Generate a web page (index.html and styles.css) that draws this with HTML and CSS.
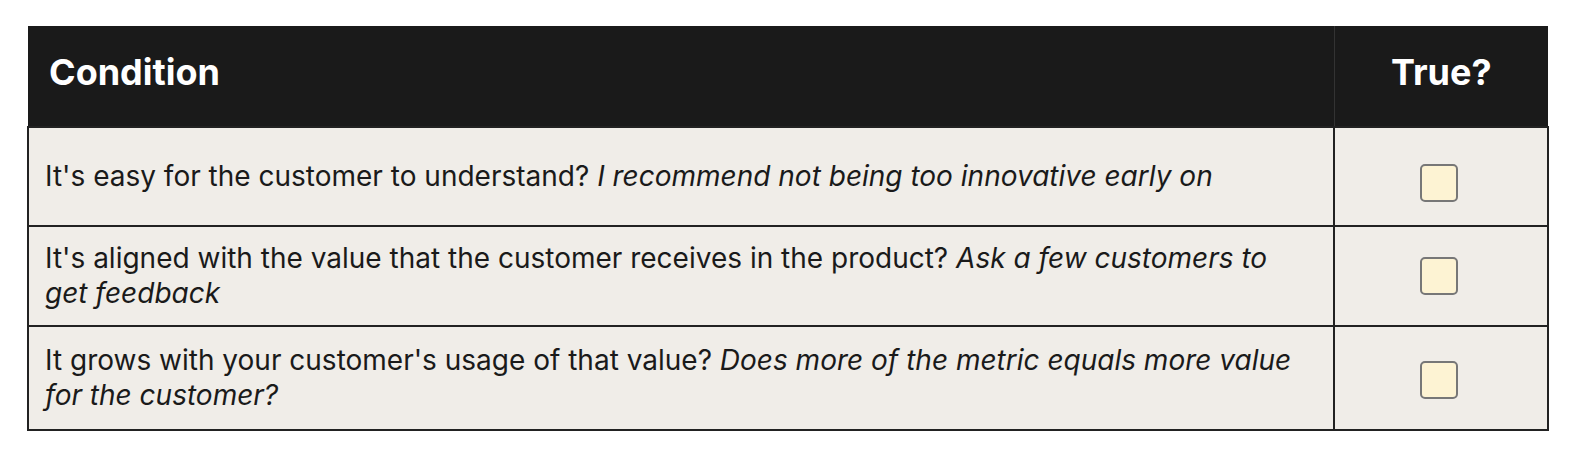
FILE: index.html
```html
<!DOCTYPE html>
<html>
<head>
<meta charset="utf-8">
<link rel="stylesheet" href="styles.css">
</head>
<body>
<table class="conditions">
  <thead>
    <tr>
      <th class="col-cond">Condition</th>
      <th class="col-true">True?</th>
    </tr>
  </thead>
  <tbody>
    <tr class="row-1">
      <td class="cond">It's easy for the customer to understand? <em>I recommend not being too innovative early on</em></td>
      <td class="check"><span class="box"></span></td>
    </tr>
    <tr>
      <td class="cond">It's aligned with the value that the customer receives in the product? <em>Ask a few customers to</em> <em>get feedback</em></td>
      <td class="check"><span class="box"></span></td>
    </tr>
    <tr class="row-3">
      <td class="cond">It grows with your customer's usage of that value? <em>Does more of the metric equals more value</em> <em>for the customer?</em></td>
      <td class="check"><span class="box"></span></td>
    </tr>
  </tbody>
</table>
</body>
</html>
```

FILE: styles.css
```css
html, body {
  margin: 0;
  background: #ffffff;
}
body {
  padding: 26px 0 0 27px;
  font-family: Inter, "Liberation Sans", sans-serif;
  color: #1a1a1a;
}
.conditions {
  border-collapse: collapse;
  width: 1522px;
  table-layout: fixed;
}
.conditions th {
  background: #1a1a1a;
  color: #ffffff;
  font-weight: 700;
  font-size: 36px;
  letter-spacing: 0;
  height: 101px;
  padding: 0 0 8px 0;
  box-sizing: border-box;
  text-align: left;
}
.col-cond {
  width: 1306px;
  padding-left: 21px !important;
  border-right: 1px solid #333;
}
.col-true {
  text-align: center !important;
}
.conditions td {
  background: #f0ede8;
  border: 2px solid #222;
  font-size: 28px;
  line-height: 35px;
  vertical-align: middle;
}
.row-1 {
  height: 99px;
}
.row-3 {
  height: 104px;
}
.cond {
  padding: 14px 40px 14px 16px;
}
.check {
  text-align: center;
  padding: 0 4px 0 0;
}
.box {
  display: inline-block;
  width: 38px;
  height: 38px;
  box-sizing: border-box;
  background: #fdf3d3;
  border: 2px solid #777;
  border-radius: 5px;
  vertical-align: middle;
}
.row-1 .box {
  margin-top: 12px;
}
.row-3 .box {
  margin-top: 4px;
}
em {
  font-style: italic;
}
```
